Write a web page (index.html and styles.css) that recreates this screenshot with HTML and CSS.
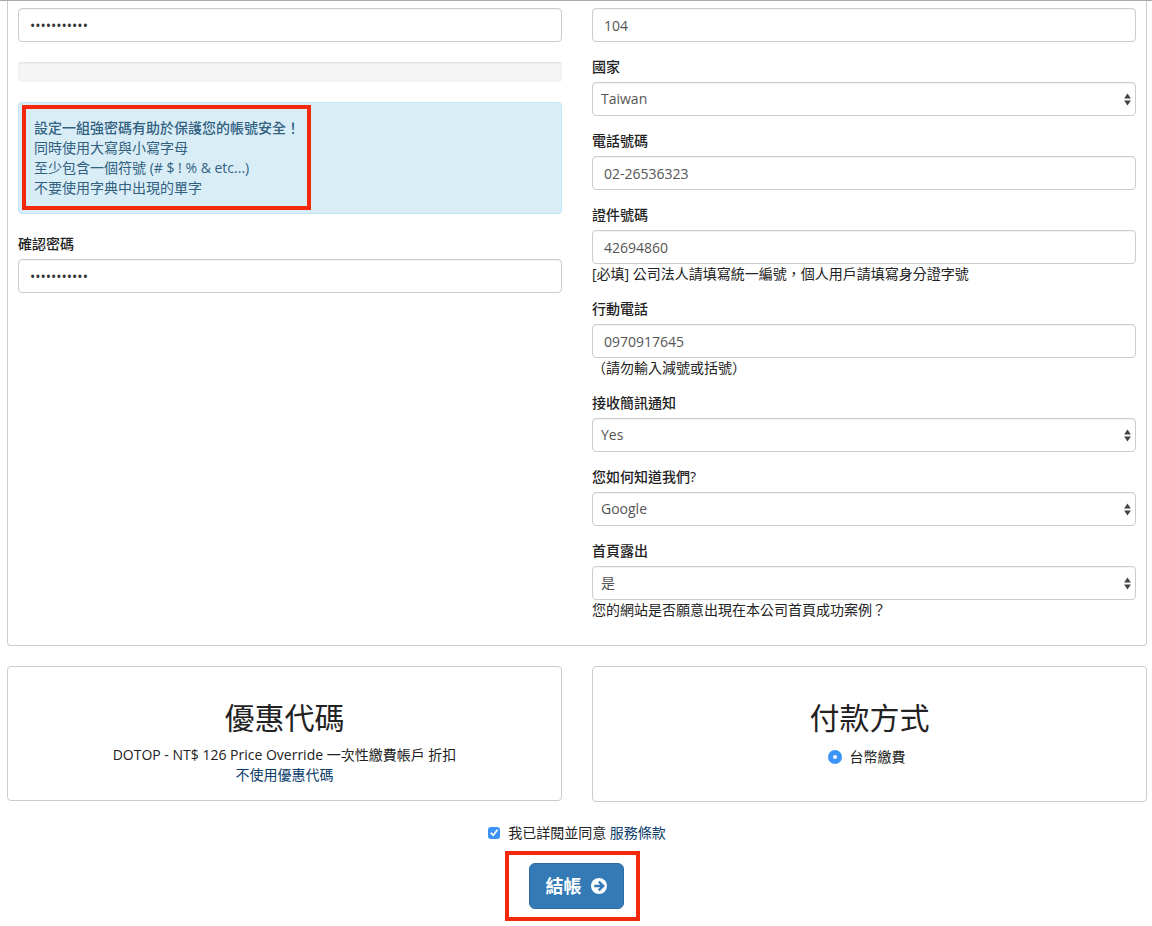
FILE: index.html
```html
<!DOCTYPE html>
<html lang="zh-Hant-TW">
<head>
<meta charset="utf-8">
<meta name="viewport" content="width=device-width, initial-scale=1">
<title>結帳</title>
<link rel="stylesheet" href="styles.css">
</head>
<body>
<form class="checkout">
  <section class="panel account">
    <div class="column">
      <input class="control password" type="password" value="abcdefghijk" aria-label="密碼">
      <div class="strength" role="progressbar" aria-label="密碼強度"></div>
      <div class="alert">
        <div class="tips">
          <strong>設定一組強密碼有助於保護您的帳號安全！</strong><br>
          同時使用大寫與小寫字母<br>
          至少包含一個符號 (# $ ! % &amp; etc...)<br>
          不要使用字典中出現的單字
          <span class="mark mark-tips"></span>
        </div>
      </div>
      <div class="group">
        <label for="confirm">確認密碼</label>
        <input class="control password" type="password" id="confirm" value="abcdefghijk">
      </div>
    </div>
    <div class="column">
      <div class="group">
        <input class="control" type="text" value="104" aria-label="郵遞區號">
      </div>
      <div class="group">
        <label for="country">國家</label>
        <div class="select">
          <select class="control" id="country"><option>Taiwan</option></select>
          <svg class="arrows" viewBox="0 0 7 13"><path d="M3.5 0.5 6.9 5.5H0.1ZM3.5 12.5 6.9 7.5H0.1Z"/></svg>
        </div>
      </div>
      <div class="group">
        <label for="phone">電話號碼</label>
        <input class="control" type="text" id="phone" value="02-26536323">
      </div>
      <div class="group">
        <label for="taxid">證件號碼</label>
        <input class="control" type="text" id="taxid" value="42694860">
        <div class="help">[必填] 公司法人請填寫統一編號，個人用戶請填寫身分證字號</div>
      </div>
      <div class="group">
        <label for="mobile">行動電話</label>
        <input class="control" type="text" id="mobile" value="0970917645">
        <div class="help">（請勿輸入減號或括號）</div>
      </div>
      <div class="group">
        <label for="sms">接收簡訊通知</label>
        <div class="select">
          <select class="control" id="sms"><option>Yes</option></select>
          <svg class="arrows" viewBox="0 0 7 13"><path d="M3.5 0.5 6.9 5.5H0.1ZM3.5 12.5 6.9 7.5H0.1Z"/></svg>
        </div>
      </div>
      <div class="group">
        <label for="source">您如何知道我們?</label>
        <div class="select">
          <select class="control" id="source"><option>Google</option></select>
          <svg class="arrows" viewBox="0 0 7 13"><path d="M3.5 0.5 6.9 5.5H0.1ZM3.5 12.5 6.9 7.5H0.1Z"/></svg>
        </div>
      </div>
      <div class="group">
        <label for="showcase">首頁露出</label>
        <div class="select">
          <select class="control" id="showcase"><option>是</option></select>
          <svg class="arrows" viewBox="0 0 7 13"><path d="M3.5 0.5 6.9 5.5H0.1ZM3.5 12.5 6.9 7.5H0.1Z"/></svg>
        </div>
        <div class="help">您的網站是否願意出現在本公司首頁成功案例？</div>
      </div>
    </div>
  </section>

  <div class="options">
    <section class="panel option">
      <h2>優惠代碼</h2>
      <div>DOTOP - NT$ 126 Price Override 一次性繳費帳戶 折扣</div>
      <a href="#">不使用優惠代碼</a>
    </section>
    <section class="panel option">
      <h2>付款方式</h2>
      <label class="payment"><input type="radio" name="payment" checked>台幣繳費</label>
    </section>
  </div>

  <div class="agree">
    <input type="checkbox" id="agree" checked>
    <span><label for="agree">我已詳閱並同意</label> <a href="#">服務條款</a></span>
  </div>
  <div class="submit">
    <span class="submit-wrap">
      <button class="button" type="button">結帳
        <svg class="arrow" viewBox="0 0 16 16"><circle cx="8" cy="8" r="8" fill="#fff"/><path d="M3.2 8H12M7.8 3.6 12.2 8 7.8 12.4" fill="none" stroke="#337ab7" stroke-width="2.4"/></svg>
      </button>
      <span class="mark mark-submit"></span>
    </span>
  </div>
</form>
</body>
</html>
```
FILE: styles.css
```css
* { box-sizing: border-box; }

body {
  margin: 0;
  border-top: 1px solid #aaa;
  background: #fff;
  color: #222;
  font: 14px/20px "Open Sans", "Noto Sans CJK TC", sans-serif;
}

.checkout { padding: 0 5px 0 7px; }

.panel {
  border: 1px solid #ccc;
  border-radius: 4px;
}

.account {
  display: grid;
  grid-template-columns: 1fr 1fr;
  column-gap: 30px;
  padding: 7px 10px 10px;
  border-top: 0;
  border-top-left-radius: 0;
  border-top-right-radius: 0;
}

.group { margin-bottom: 15px; }

.group label {
  display: block;
  width: fit-content;
  margin-bottom: 5px;
  font-weight: 500;
}

.control {
  display: block;
  width: 100%;
  height: 34px;
  padding: 6px 11px;
  border: 1px solid #ccc;
  border-radius: 4px;
  background: #fff;
  box-shadow: inset 0 1px 1px rgba(0, 0, 0, 0.05);
  color: #555;
  font: inherit;
}

.password { color: #333; }

.select { position: relative; }

.select .control {
  appearance: none;
  padding: 0 8px;
}

.arrows {
  position: absolute;
  top: 11px;
  right: 5px;
  width: 7px;
  height: 13px;
  fill: #444;
  pointer-events: none;
}

.strength {
  height: 20px;
  margin: 20px 0;
  border-radius: 4px;
  background: #f5f5f5;
  box-shadow: inset 0 1px 2px rgba(0, 0, 0, 0.1);
}

.alert {
  margin-bottom: 20px;
  padding: 15px;
  border: 1px solid #bce8f1;
  border-radius: 4px;
  background: #d9edf7;
  color: #31617f;
}

.alert strong { font-weight: 500; }

.tips {
  position: relative;
  width: fit-content;
}

.mark {
  position: absolute;
  border: 4px solid #f4290c;
  pointer-events: none;
}

.mark-tips { inset: -13px -11px -12px -12px; }

.options {
  display: grid;
  grid-template-columns: 1fr 1fr;
  align-items: start;
  gap: 30px;
  margin-top: 20px;
}

.option {
  padding: 15px;
  text-align: center;
}

h2 {
  margin: 19px 0 11px;
  font-size: 30px;
  font-weight: 400;
  line-height: 33px;
}

a {
  color: #0d3d6b;
  text-decoration: none;
}

input[type="radio"],
input[type="checkbox"] {
  appearance: none;
  flex: none;
  margin: 0;
}

input[type="radio"] {
  width: 14px;
  height: 14px;
  border: 5px solid #3b94f7;
  border-radius: 50%;
  background: #fff;
}

input[type="checkbox"] {
  display: grid;
  place-items: center;
  width: 12px;
  height: 12px;
  border-radius: 3px;
  background: #3b94f7;
}

input[type="checkbox"]:checked::before {
  content: "";
  width: 8px;
  height: 8px;
  background: #fff;
  clip-path: polygon(0 55%, 16% 38%, 38% 62%, 82% 2%, 100% 16%, 40% 94%);
}

.payment {
  display: flex;
  align-items: center;
  justify-content: center;
  gap: 8px;
  padding: 2px 6px 19px 0;
}

.agree {
  display: flex;
  align-items: center;
  justify-content: center;
  gap: 8px;
  margin-top: 21px;
}

.submit {
  display: flex;
  justify-content: center;
  padding: 20px 2px 16px 0;
}

.submit-wrap { position: relative; }

.button {
  display: flex;
  align-items: center;
  gap: 9px;
  height: 46px;
  padding: 0 16px;
  border: 1px solid #2e6da4;
  border-radius: 6px;
  background: #337ab7;
  color: #fff;
  font: 700 18px/24px "Open Sans", "Noto Sans CJK TC", sans-serif;
}

.arrow {
  width: 16px;
  height: 16px;
}

.mark-submit { inset: -12px -16px -12px -24px; }
```
